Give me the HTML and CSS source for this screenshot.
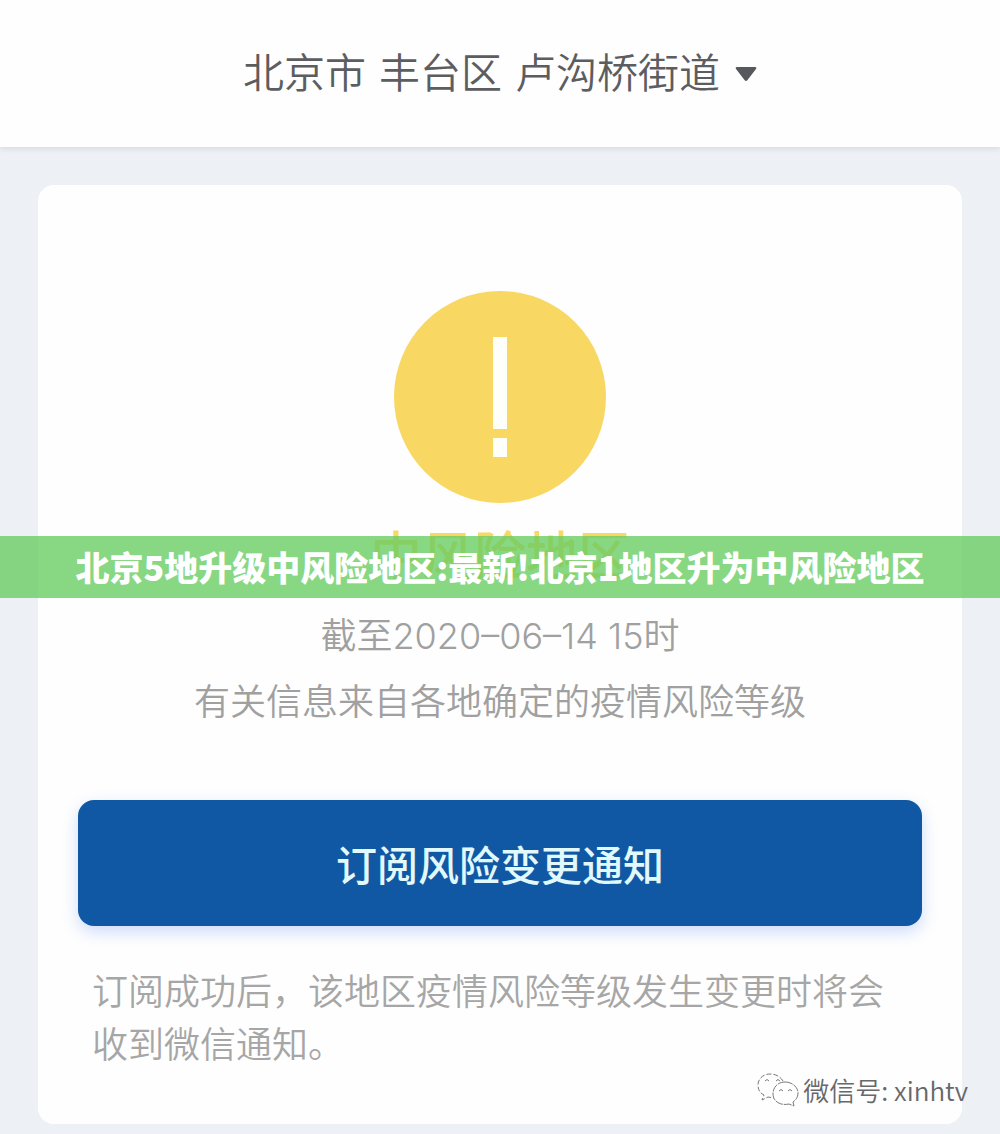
FILE: index.html
```html
<!DOCTYPE html>
<html lang="zh-CN">
<head>
    <meta charset="UTF-8">
    <meta name="viewport" content="width=device-width, initial-scale=1.0">
    <title>疫情风险等级查询</title>
    <link rel="stylesheet" href="styles.css">
</head>
<body>

    <header class="header">
        <div class="area">
            <select class="area-select" aria-label="选择地区">
                <option>北京市 丰台区 卢沟桥街道</option>
            </select>
            <svg class="area-arrow" width="22" height="16" viewBox="0 0 22 16" aria-hidden="true">
                <path d="M2 1H20Q22 1 21 3L12.500 14Q11 16 9.500 14L1 3Q0 1 2 1Z" fill="#57585c"/>
            </svg>
        </div>
    </header>

    <main class="container">
        <section class="card">
            <svg class="risk-icon" viewBox="0 0 212 212" aria-hidden="true">
                <circle cx="106" cy="106" r="106" fill="#f8d862"/>
                <rect x="99" y="46" width="14" height="92" fill="#fffffa"/>
                <rect x="99" y="147" width="14" height="19" fill="#fffffa"/>
            </svg>
            <h1 class="risk-title">中风险地区</h1>
            <p class="info">截至2020–06–14 15时</p>
            <p class="info">有关信息来自各地确定的疫情风险等级</p>
            <button class="subscribe" type="button">订阅风险变更通知</button>
            <p class="note">订阅成功后，该地区疫情风险等级发生变更时将会收到微信通知。</p>
        </section>
    </main>

    <div class="banner">北京5地升级中风险地区:最新!北京1地区升为中风险地区</div>

    <div class="watermark">
        <svg width="42" height="34" viewBox="0 0 42 34" fill="none" stroke="#77797b" stroke-width="1" aria-hidden="true">
            <path stroke-dasharray="5 2" d="M26 8C23 3 18 1 13 1C6 1 1 6 1 12C1 17 3 20 7 22L5 27L11 24L17 25"/>
            <path stroke-dasharray="8 1" d="M28 9C35 9 41 14 41 20C41 24 39 27 36 29L37 33L32 31C23 33 16 28 16 21C16 14 21 9 28 9Z" fill="#ffffff"/>
            <path d="M8 8Q10 5 12 8M19 8Q21 5 23 8M22 18Q24 15 26 18M31 18Q33 15 35 18"/>
        </svg>
        <span>微信号: xinhtv</span>
    </div>

</body>
</html>
```
FILE: styles.css
```css
* {
    box-sizing: border-box;
}
body {
    position: relative;
    margin: 0;
    background-color: #edf1f6;
    font-family: Inter, "Noto Sans CJK SC", sans-serif;
    font-weight: 350;
}
.header {
    display: flex;
    justify-content: center;
    padding: 44px 20px 43px;
    background-color: #fefefe;
    box-shadow: 0 1px 6px rgba(0, 0, 0, 0.12);
}
.area {
    display: flex;
    align-items: center;
    gap: 14px;
}
.area-select {
    height: 60px;
    padding: 0;
    border: none;
    background: none;
    appearance: none;
    color: #5c5d60;
    font-family: "DejaVu Sans", "Noto Sans CJK SC", sans-serif;
    font-size: 41px;
    font-weight: 350;
}
.container {
    padding: 38px 38px 10px;
}
.card {
    padding: 106px 40px 52px;
    background-color: #fefefe;
    border-radius: 16px;
    text-align: center;
}
.risk-icon {
    display: block;
    width: 212px;
    margin: 0 auto 24px;
}
.risk-title {
    margin: 0 0 16px;
    color: #f8d862;
    font-size: 52px;
    font-weight: 500;
    line-height: 60px;
}
.info {
    margin: 0;
    color: #a0a0a0;
    font-size: 36px;
    line-height: 66px;
}
.subscribe {
    width: 100%;
    height: 126px;
    margin: 65px 0 40px;
    border: none;
    border-radius: 16px;
    background-color: #1158a4;
    box-shadow: 0 6px 16px rgba(60, 110, 240, 0.24);
    color: #e2f9fc;
    font-family: inherit;
    font-size: 41px;
    font-weight: 500;
    cursor: pointer;
}
.note {
    margin: 0;
    padding: 0 14px;
    color: #a6a6a6;
    font-size: 36px;
    line-height: 53px;
    text-align: left;
}
/* translucent strip over the card title */
.banner {
    position: absolute;
    top: 536px;
    left: 0;
    right: 0;
    background-color: rgba(106, 205, 100, 0.8);
    color: #fff;
    font-family: "Noto Sans CJK SC", sans-serif;
    font-size: 34px;
    font-weight: 900;
    line-height: 62px;
    text-align: center;
}
.watermark {
    position: absolute;
    right: 32px;
    bottom: 26px;
    display: flex;
    align-items: center;
    gap: 4px;
    color: #66686a;
    font-family: "Noto Sans CJK SC", sans-serif;
    font-size: 26px;
    line-height: 36px;
}
```
